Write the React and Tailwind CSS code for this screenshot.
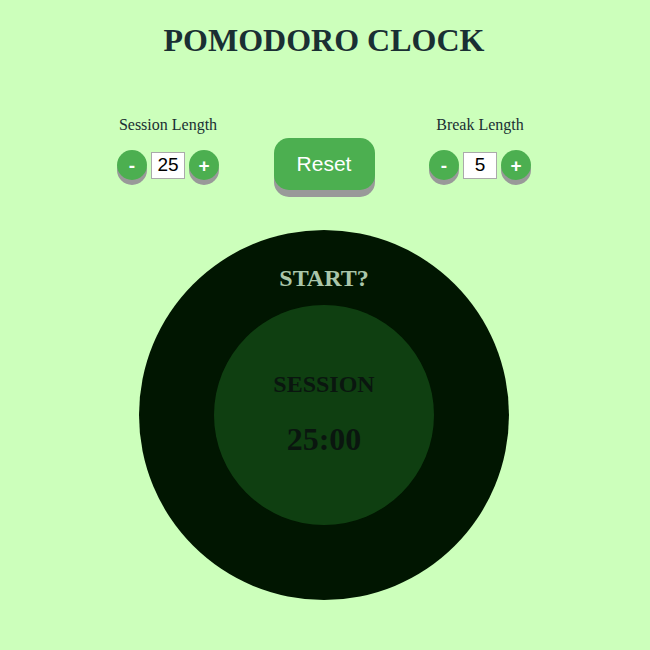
export default function App() {
  const serif = { fontFamily: '"Liberation Serif", "Times New Roman", serif' };
  const Ctrl = ({ label, value }) => (
    <div className="flex w-[156px] flex-col items-center">
      <div className="text-[16px] leading-[18px] text-[#1a2f33]" style={serif}>{label}</div>
      <div className="mt-[16px] flex items-center gap-[4px] font-['Liberation_Sans',Arial,sans-serif]">
        <button className="flex h-[30px] w-[30px] items-center justify-center rounded-full bg-[#4caf50] text-[19px] font-bold leading-none text-white shadow-[0_5px_0_#999999]">-</button>
        <div className="flex h-[27px] w-[34px] items-center justify-center border border-[#aaaaaa] bg-white text-[19px] text-black">{value}</div>
        <button className="flex h-[30px] w-[30px] items-center justify-center rounded-full bg-[#4caf50] text-[19px] font-bold leading-none text-white shadow-[0_5px_0_#999999]">+</button>
      </div>
    </div>
  );
  return (
    <div className="min-h-[650px] w-full bg-[#ccffbb] pr-[2px]">
      <h1 className="pt-[21px] text-center text-[32px] font-bold leading-[38px] text-[#1a2f33]" style={serif}>POMODORO CLOCK</h1>
      <div className="mt-[57px] flex items-start justify-center">
        <Ctrl label="Session Length" value="25" />
        <div className="flex w-[156px] justify-center pt-[22px]">
          <button className="h-[52px] w-[101px] rounded-[15px] bg-[#4caf50] text-[21px] text-white shadow-[0_7px_0_#999999] font-['Liberation_Sans',Arial,sans-serif]">Reset</button>
        </div>
        <Ctrl label="Break Length" value="5" />
      </div>
      <div className="mt-[40px] flex justify-center">
        <div className="flex h-[370px] w-[370px] flex-col items-center rounded-full bg-[#011601] pt-[34px]" style={serif}>
          <div className="text-[24px] font-bold leading-[28px] text-[#aac6aa]">START?</div>
          <div className="mt-[13px] flex h-[220px] w-[220px] flex-col items-center rounded-full bg-[#0f3f11] pt-[65px]">
            <div className="text-[24px] font-bold leading-[28px] text-[#0a160f]">SESSION</div>
            <div className="mt-[22px] text-[32px] font-bold leading-[38px] text-[#0a160f]">25:00</div>
          </div>
        </div>
      </div>
    </div>
  );
}
